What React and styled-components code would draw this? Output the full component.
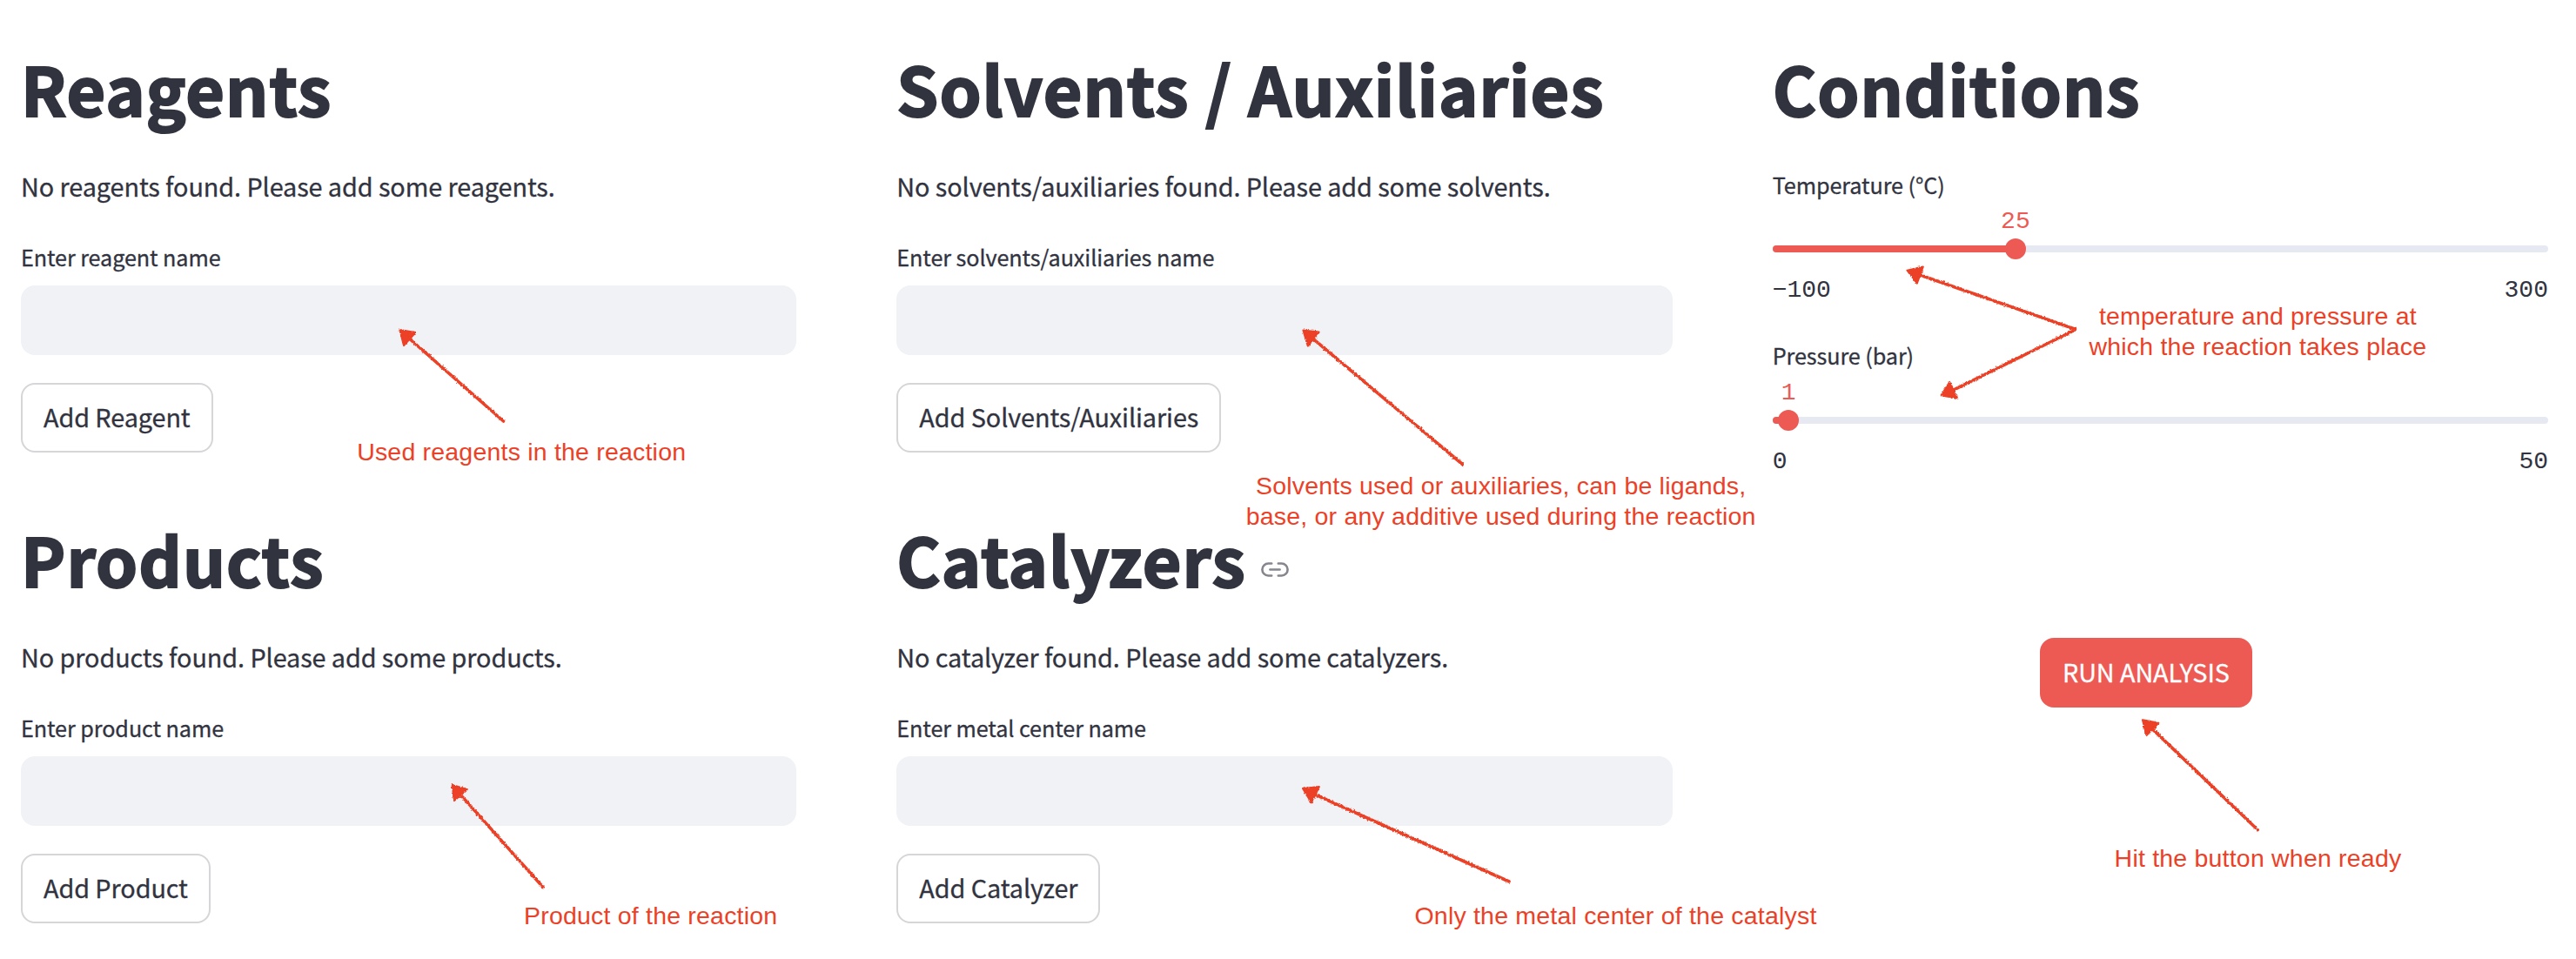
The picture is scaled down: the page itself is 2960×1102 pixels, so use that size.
import React from "react";
import styled, { createGlobalStyle } from "styled-components";

const INK = "#31333f";
const ACCENT = "#ed5a54";
const NOTE = "#ec4127";
const SANS = '"Noto Sans CJK SC", "Noto Sans", sans-serif';

const GlobalStyle = createGlobalStyle`
  body {
    margin: 0;
    background: #ffffff;
    color: ${INK};
    font-family: ${SANS};
    letter-spacing: -0.08px;
    -webkit-text-stroke: 0.3px;
  }
  * { box-sizing: border-box; }
`;

const Page = styled.main`
  position: relative;
  display: grid;
  grid-template-columns: repeat(3, 1fr);
  column-gap: 115px;
  width: 2960px;
  height: 1102px;
  padding: 48px 32px 0 24px;
  overflow: hidden;
`;

const Column = styled.div`
  display: flex;
  flex-direction: column;
  gap: 69px;
  min-width: 0;
`;

const Section = styled.section`
  display: flex;
  flex-direction: column;
  align-items: flex-start;
`;

const Heading = styled.h1`
  display: flex;
  align-items: center;
  gap: 17px;
  margin: 0;
  height: 106px;
  font-size: 77px;
  font-weight: 700;
  line-height: 106px;
  letter-spacing: 1.02px;
  white-space: nowrap;
  -webkit-text-stroke: 2.1px ${INK};
`;

const Message = styled.p`
  margin: 33.5px 0 34.5px;
  font-size: 28.8px;
  line-height: 52px;
  white-space: nowrap;
`;

const Label = styled.label`
  font-size: 25.2px;
  line-height: 42px;
  white-space: nowrap;
`;

const Input = styled.input`
  width: 100%;
  height: 80px;
  margin: 12px 0 32px;
  padding: 0 24px;
  border: 0;
  border-radius: 16px;
  background: #f0f2f6;
  font: inherit;
`;

const Button = styled.button`
  height: 80px;
  padding: 0 24px 2px;
  border: 2px solid ${(p) => (p.$primary ? ACCENT : "#d6d6d9")};
  border-radius: 16px;
  background: ${(p) => (p.$primary ? ACCENT : "#ffffff")};
  color: ${(p) => (p.$primary ? "#ffffff" : INK)};
  font-family: inherit;
  font-size: 28.8px;
  line-height: 52px;
  letter-spacing: -0.08px;
  white-space: nowrap;
`;

const Sliders = styled.div`
  display: flex;
  flex-direction: column;
  width: 100%;
  gap: 29px;
  margin-top: 37px;
`;

const SliderBox = styled.div`
  display: flex;
  flex-direction: column;
  height: 167.4px;
`;

const Track = styled.div`
  position: relative;
  flex: none;
  height: 8px;
  margin-top: 49.2px;
  border-radius: 4px;
  background: #e6e9f1;
`;

const Fill = styled.div`
  height: 100%;
  border-radius: 4px;
  background: ${ACCENT};
`;

const Thumb = styled.div`
  position: absolute;
  top: -8px;
  width: 24px;
  height: 24px;
  margin-left: -11.3px;
  border-radius: 50%;
  background: ${ACCENT};
`;

const Value = styled.span`
  position: absolute;
  bottom: 27px;
  left: 50%;
  color: ${ACCENT};
  font-family: "Liberation Mono", monospace;
  font-size: 28px;
  line-height: 32px;
  letter-spacing: 0;
  transform: translateX(-50%);
  -webkit-text-stroke: 0;
`;

const Range = styled.div`
  display: flex;
  justify-content: space-between;
  margin-top: 24.3px;
  font-family: "Liberation Mono", monospace;
  font-size: 28px;
  line-height: 40px;
  letter-spacing: 0;
  -webkit-text-stroke: 0;
`;

const RunRow = styled.div`
  display: flex;
  padding: 109.2px 0 0 307.3px;
`;

const Arrows = styled.svg`
  position: absolute;
  inset: 0;
  pointer-events: none;
`;

const Note = styled.p`
  position: absolute;
  left: ${(p) => p.$x}px;
  top: ${(p) => p.$y}px;
  margin: 0;
  color: ${NOTE};
  font-family: "Liberation Sans", sans-serif;
  font-size: 28.5px;
  line-height: 35px;
  letter-spacing: 0.2px;
  text-align: center;
  white-space: pre;
  transform: translateX(-50%);
  -webkit-text-stroke: 0;
`;

const IconBox = styled.span`
  display: flex;
  margin-top: 24px;
`;

const LinkIcon = () => (
  <IconBox>
    <svg width="32" height="17" viewBox="0 0 32 17" fill="none" stroke="#85868e" strokeWidth="2.6" strokeLinecap="round">
      <path d="M12.2 1.5H8.4a7 7 0 0 0 0 14H12.2M19.8 1.5h3.8a7 7 0 0 1 0 14H19.8M10.4 8.5h11.2" />
    </svg>
  </IconBox>
);

function Entry({ title, message, label, action, linked }) {
  return (
    <Section>
      <Heading>
        {title}
        {linked && <LinkIcon />}
      </Heading>
      <Message>{message}</Message>
      <Label>{label}</Label>
      <Input aria-label={label} />
      <Button>{action}</Button>
    </Section>
  );
}

function Slider({ label, min, max, value, minText }) {
  const pct = `${((value - min) / (max - min)) * 100}%`;
  return (
    <SliderBox>
      <Label>{label}</Label>
      <Track>
        <Fill style={{ width: pct }} />
        <Thumb style={{ left: pct }}>
          <Value>{value}</Value>
        </Thumb>
      </Track>
      <Range>
        <span>{minText}</span>
        <span>{max}</span>
      </Range>
    </SliderBox>
  );
}

// Each arrow: tail point, tip point, then the two back corners of its head.
const ARROWS = [
  [578.5, 484, 459.5, 379, 477.5, 382, 464, 397],
  [1680.5, 533.5, 1497.5, 379.5, 1515.5, 381.7, 1502.8, 397.5],
  [2384.5, 378.3, 2191.5, 310.7, 2209.7, 306.5, 2202.7, 325.5],
  [2381.5, 380.5, 2230.5, 454.3, 2240.3, 439, 2249, 457.3],
  [624, 1019.5, 519.8, 902, 537, 907.2, 522, 920],
  [1734, 1013, 1497, 906, 1515.8, 904, 1507, 922.3],
  [2594.2, 953.5, 2462, 827.3, 2480.3, 830.8, 2466.5, 845],
];

const NOTES = [
  { x: 599.2, y: 502.3, text: "Used reagents in the reaction" },
  { x: 1724.7, y: 541, text: "Solvents used or auxiliaries, can be ligands,\nbase, or any additive used during the reaction" },
  { x: 2594.4, y: 345.5, text: "temperature and pressure at\nwhich the reaction takes place" },
  { x: 747.7, y: 1034.8, text: "Product of the reaction" },
  { x: 1856.5, y: 1034.8, text: "Only the metal center of the catalyst" },
  { x: 2594.5, y: 968.5, text: "Hit the button when ready" },
];

export default function App() {
  return (
    <>
      <GlobalStyle />
      <Page>
        <Column>
          <Entry
            title="Reagents"
            message="No reagents found. Please add some reagents."
            label="Enter reagent name"
            action="Add Reagent"
          />
          <Entry
            title="Products"
            message="No products found. Please add some products."
            label="Enter product name"
            action="Add Product"
          />
        </Column>
        <Column>
          <Entry
            title="Solvents / Auxiliaries"
            message="No solvents/auxiliaries found. Please add some solvents."
            label="Enter solvents/auxiliaries name"
            action="Add Solvents/Auxiliaries"
          />
          <Entry
            title="Catalyzers"
            message="No catalyzer found. Please add some catalyzers."
            label="Enter metal center name"
            action="Add Catalyzer"
            linked
          />
        </Column>
        <Column>
          <Section>
            <Heading>Conditions</Heading>
            <Sliders>
              <Slider label="Temperature (°C)" min={-100} max={300} value={25} minText="−100" />
              <Slider label="Pressure (bar)" min={0} max={50} value={1} minText="0" />
            </Sliders>
          </Section>
          <RunRow>
            <Button $primary>RUN ANALYSIS</Button>
          </RunRow>
        </Column>

        <Arrows width="2960" height="1102" viewBox="0 0 2960 1102">
          <defs>
            <filter
              id="chalk"
              filterUnits="userSpaceOnUse"
              x="0"
              y="0"
              width="2960"
              height="1102"
              colorInterpolationFilters="sRGB"
            >
              <feTurbulence type="fractalNoise" baseFrequency="0.45" numOctaves="2" seed="4" result="grain" />
              <feDisplacementMap in="SourceGraphic" in2="grain" scale="3" xChannelSelector="R" yChannelSelector="G" />
            </filter>
          </defs>
          <g filter="url(#chalk)" stroke={NOTE} fill={NOTE} strokeLinecap="round" strokeLinejoin="round">
            {ARROWS.map(([x1, y1, x2, y2, ax, ay, bx, by]) => (
              <g key={x1}>
                <line x1={x1} y1={y1} x2={(ax + bx) / 2} y2={(ay + by) / 2} strokeWidth="3.6" />
                <path d={`M${x2} ${y2}L${ax} ${ay}L${bx} ${by}Z`} strokeWidth="2.2" />
              </g>
            ))}
          </g>
        </Arrows>
        {NOTES.map((n) => (
          <Note key={n.text} $x={n.x} $y={n.y}>
            {n.text}
          </Note>
        ))}
      </Page>
    </>
  );
}
